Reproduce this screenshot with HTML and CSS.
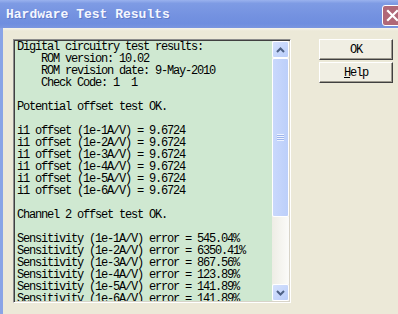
FILE: index.html
```html
<!DOCTYPE html>
<html>
<head>
<meta charset="utf-8">
<link rel="stylesheet" href="styles.css">
</head>
<body>
<div class="window">
  <div class="titlebar">
    <span class="title">Hardware Test Results</span>
    <span class="close">
      <svg width="13" height="13" viewBox="0 0 13 13"><path d="M2 2 L11 11 M11 2 L2 11" stroke="#fff" stroke-width="2.2" stroke-linecap="square"/></svg>
    </span>
  </div>
  <div class="content">
    <div class="textbox">
      <div class="text">Digital circuitry test results:
    ROM version: 10.02
    ROM revision date: 9-May-2010
    Check Code: 1  1

Potential offset test OK.

i1 offset (1e-1A/V) = 9.6724
i1 offset (1e-2A/V) = 9.6724
i1 offset (1e-3A/V) = 9.6724
i1 offset (1e-4A/V) = 9.6724
i1 offset (1e-5A/V) = 9.6724
i1 offset (1e-6A/V) = 9.6724

Channel 2 offset test OK.

Sensitivity (1e-1A/V) error = 545.04%
Sensitivity (1e-2A/V) error = 6350.41%
Sensitivity (1e-3A/V) error = 867.56%
Sensitivity (1e-4A/V) error = 123.89%
Sensitivity (1e-5A/V) error = 141.89%
Sensitivity (1e-6A/V) error = 141.89%</div>
      <div class="scrollbar">
        <div class="sb-btn">
          <svg width="9" height="6" viewBox="0 0 9 6"><path d="M1 5 L4.5 1.5 L8 5" fill="none" stroke="#4d6185" stroke-width="2"/></svg>
        </div>
        <div class="sb-thumb">
          <div class="grip"></div>
        </div>
        <div class="sb-track"></div>
        <div class="sb-btn">
          <svg width="9" height="6" viewBox="0 0 9 6"><path d="M1 1 L4.5 4.5 L8 1" fill="none" stroke="#4d6185" stroke-width="2"/></svg>
        </div>
      </div>
    </div>
    <div class="buttons">
      <div class="btn">OK</div>
      <div class="btn"><u>H</u>elp</div>
    </div>
  </div>
</div>
</body>
</html>
```
FILE: styles.css
```css
html, body {
  margin: 0;
  padding: 0;
  width: 398px;
  height: 314px;
  overflow: hidden;
  background: #ece9d8;
}

.window {
  width: 404px;
  height: 314px;
  display: flex;
  flex-direction: column;
  border-left: 3px solid #8aa4e6;
  box-sizing: border-box;
  background: #ece9d8;
}

.titlebar {
  height: 28px;
  flex: none;
  display: flex;
  align-items: center;
  justify-content: space-between;
  background: linear-gradient(to bottom, #9ab2ee 0%, #7e9be4 12%, #7391e0 60%, #6f8edf 85%, #7a96e0 100%);
  padding-left: 3px;
  box-sizing: border-box;
  margin-left: -3px;
}

.title {
  font-family: "Liberation Mono", monospace;
  font-weight: bold;
  font-size: 13px;
  color: #f4f7ff;
  padding-left: 3px;
  text-shadow: 1px 1px 0 rgba(40, 60, 140, 0.3);
}

.close {
  width: 19px;
  height: 19px;
  margin-top: 2px;
  margin-right: 1px;
  border: 1px solid #ffffff;
  border-radius: 3px;
  background: #b06878;
  display: flex;
  align-items: center;
  justify-content: center;
}

.content {
  flex: 1;
  display: flex;
  align-items: flex-start;
  padding: 11px 0 0 10px;
  background: linear-gradient(to bottom, #f6f4ea 0, #ece9d8 3px);
}

.textbox {
  width: 278px;
  height: 264px;
  box-sizing: border-box;
  display: flex;
  border: 1px solid;
  border-color: #8c8c8c #ffffff #ffffff #8c8c8c;
  box-shadow: inset 1px 1px 0 #404040, inset -1px -1px 0 #d8d4c8;
  padding: 1px;
  background: #cfe8d1;
}

.text {
  flex: 1;
  overflow: hidden;
  white-space: pre;
  font-family: "Liberation Mono", monospace;
  font-size: 12px;
  letter-spacing: -1.2px;
  line-height: 12px;
  color: #000000;
  padding-left: 2px;
}

.scrollbar {
  width: 17px;
  flex: none;
  display: flex;
  flex-direction: column;
  background: #f4f3ee;
}

.sb-btn {
  height: 17px;
  flex: none;
  box-sizing: border-box;
  border: 1px solid #ffffff;
  border-radius: 2px;
  background: linear-gradient(to bottom right, #d6e2fd, #b9cdfa);
  display: flex;
  align-items: center;
  justify-content: center;
}

.sb-thumb {
  height: 159px;
  flex: none;
  box-sizing: border-box;
  border: 1px solid #ffffff;
  border-radius: 2px;
  background: linear-gradient(to right, #c9d8fc, #bccffa);
  display: flex;
  align-items: center;
  justify-content: center;
}

.grip {
  width: 7px;
  height: 7px;
  background: repeating-linear-gradient(to bottom, #eef3ff 0, #eef3ff 1px, #9cb4ec 1px, #9cb4ec 2px);
}

.sb-track {
  flex: 1;
  background: linear-gradient(to right, #eeede5, #fbfbf9);
}

.buttons {
  margin-left: 28px;
  display: flex;
  flex-direction: column;
  gap: 2px;
}

.btn {
  width: 74px;
  height: 21px;
  box-sizing: border-box;
  border: 1px solid;
  border-color: #ffffff #404040 #404040 #ffffff;
  box-shadow: inset -1px -1px 0 #9d9a8f;
  background: #f0eee3;
  display: flex;
  align-items: center;
  justify-content: center;
  font-family: "Liberation Mono", monospace;
  font-size: 12px;
  letter-spacing: -1.2px;
  color: #000000;
}

.btn u {
  text-decoration: underline;
}
```
